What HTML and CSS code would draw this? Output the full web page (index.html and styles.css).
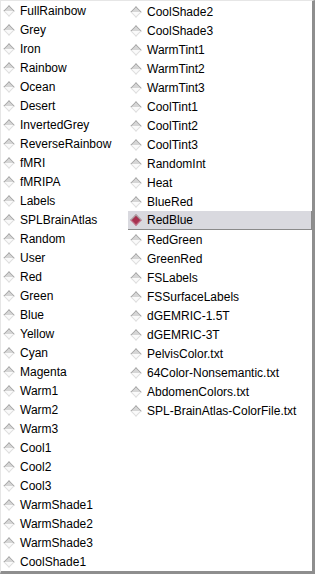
FILE: index.html
```html
<!DOCTYPE html>
<html lang="en">

<head>
    <meta charset="UTF-8">
    <title>Color Tables</title>
    <link rel="stylesheet" href="styles.css">
</head>

<body>
    <div id="color-menu">
        <div class="menu-column left-column">
            <div class="menu-item"><span class="radio"></span>FullRainbow</div>
            <div class="menu-item"><span class="radio"></span>Grey</div>
            <div class="menu-item"><span class="radio"></span>Iron</div>
            <div class="menu-item"><span class="radio"></span>Rainbow</div>
            <div class="menu-item"><span class="radio"></span>Ocean</div>
            <div class="menu-item"><span class="radio"></span>Desert</div>
            <div class="menu-item"><span class="radio"></span>InvertedGrey</div>
            <div class="menu-item"><span class="radio"></span>ReverseRainbow</div>
            <div class="menu-item"><span class="radio"></span>fMRI</div>
            <div class="menu-item"><span class="radio"></span>fMRIPA</div>
            <div class="menu-item"><span class="radio"></span>Labels</div>
            <div class="menu-item"><span class="radio"></span>SPLBrainAtlas</div>
            <div class="menu-item"><span class="radio"></span>Random</div>
            <div class="menu-item"><span class="radio"></span>User</div>
            <div class="menu-item"><span class="radio"></span>Red</div>
            <div class="menu-item"><span class="radio"></span>Green</div>
            <div class="menu-item"><span class="radio"></span>Blue</div>
            <div class="menu-item"><span class="radio"></span>Yellow</div>
            <div class="menu-item"><span class="radio"></span>Cyan</div>
            <div class="menu-item"><span class="radio"></span>Magenta</div>
            <div class="menu-item"><span class="radio"></span>Warm1</div>
            <div class="menu-item"><span class="radio"></span>Warm2</div>
            <div class="menu-item"><span class="radio"></span>Warm3</div>
            <div class="menu-item"><span class="radio"></span>Cool1</div>
            <div class="menu-item"><span class="radio"></span>Cool2</div>
            <div class="menu-item"><span class="radio"></span>Cool3</div>
            <div class="menu-item"><span class="radio"></span>WarmShade1</div>
            <div class="menu-item"><span class="radio"></span>WarmShade2</div>
            <div class="menu-item"><span class="radio"></span>WarmShade3</div>
            <div class="menu-item"><span class="radio"></span>CoolShade1</div>
        </div>
        <div class="menu-column right-column">
            <div class="menu-item"><span class="radio"></span>CoolShade2</div>
            <div class="menu-item"><span class="radio"></span>CoolShade3</div>
            <div class="menu-item"><span class="radio"></span>WarmTint1</div>
            <div class="menu-item"><span class="radio"></span>WarmTint2</div>
            <div class="menu-item"><span class="radio"></span>WarmTint3</div>
            <div class="menu-item"><span class="radio"></span>CoolTint1</div>
            <div class="menu-item"><span class="radio"></span>CoolTint2</div>
            <div class="menu-item"><span class="radio"></span>CoolTint3</div>
            <div class="menu-item"><span class="radio"></span>RandomInt</div>
            <div class="menu-item"><span class="radio"></span>Heat</div>
            <div class="menu-item"><span class="radio"></span>BlueRed</div>
            <div class="menu-item selected"><span class="radio"></span>RedBlue</div>
            <div class="menu-item"><span class="radio"></span>RedGreen</div>
            <div class="menu-item"><span class="radio"></span>GreenRed</div>
            <div class="menu-item"><span class="radio"></span>FSLabels</div>
            <div class="menu-item"><span class="radio"></span>FSSurfaceLabels</div>
            <div class="menu-item"><span class="radio"></span>dGEMRIC-1.5T</div>
            <div class="menu-item"><span class="radio"></span>dGEMRIC-3T</div>
            <div class="menu-item"><span class="radio"></span>PelvisColor.txt</div>
            <div class="menu-item"><span class="radio"></span>64Color-Nonsemantic.txt</div>
            <div class="menu-item"><span class="radio"></span>AbdomenColors.txt</div>
            <div class="menu-item"><span class="radio"></span>SPL-BrainAtlas-ColorFile.txt</div>
        </div>
    </div>
</body>

</html>
```

FILE: styles.css
```css
body,
html {
    margin: 0;
    padding: 0;
    background: #ffffff;
    font-family: 'Liberation Sans', Arial, sans-serif;
    color: #000000;
}

#color-menu {
    box-sizing: border-box;
    width: 315px;
    height: 574px;
    display: flex;
    padding-top: 1px;
    background: #ffffff;
    border-top: 1px solid #e6e6e6;
    border-left: 1px solid #e6e6e6;
    border-right: 3px solid #8e8e8e;
    border-bottom: 3px solid #8e8e8e;
}

.menu-column {
    display: flex;
    flex-direction: column;
}

.left-column {
    width: 127px;
}

.right-column {
    flex: 1;
}

.menu-item {
    box-sizing: border-box;
    height: 19px;
    display: flex;
    align-items: center;
    gap: 6px;
    padding-left: 3px;
    font-size: 12px;
    white-space: nowrap;
}

.menu-item.selected {
    background: #d9d9df;
    border-bottom: 1px solid #8a8a8a;
    border-right: 1px solid #8a8a8a;
}

/* beveled diamond radio mark */
.radio {
    position: relative;
    width: 10px;
    height: 10px;
    flex: none;
}

.radio::before {
    content: "";
    position: absolute;
    left: 1px;
    top: 1px;
    width: 6px;
    height: 6px;
    transform: rotate(45deg);
    background: linear-gradient(135deg, #d6d6d6 50%, #fafafa 50%);
    border-top: 1px solid #a8a8a8;
    border-left: 1px solid #a8a8a8;
    border-right: 1px solid #dedede;
    border-bottom: 1px solid #dedede;
}

.selected .radio::before {
    background: #a8304f;
    border-right-color: #c07088;
    border-bottom-color: #c07088;
}
```
